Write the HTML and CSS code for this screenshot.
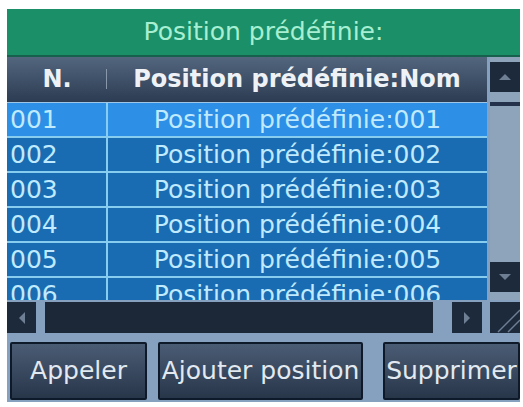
FILE: index.html
```html
<!DOCTYPE html>
<html>
<head>
<meta charset="utf-8">
<link rel="stylesheet" href="styles.css">
</head>
<body>
<div class="panel">
  <div class="title">Position prédéfinie:</div>
  <div class="main">
    <div class="table">
      <div class="thead">
        <div class="th th-num">N.</div>
        <div class="th th-name">Position prédéfinie:Nom</div>
      </div>
      <div class="tbody">
        <div class="row sel"><div class="c-num">001</div><div class="c-name">Position prédéfinie:001</div></div>
        <div class="row"><div class="c-num">002</div><div class="c-name">Position prédéfinie:002</div></div>
        <div class="row"><div class="c-num">003</div><div class="c-name">Position prédéfinie:003</div></div>
        <div class="row"><div class="c-num">004</div><div class="c-name">Position prédéfinie:004</div></div>
        <div class="row"><div class="c-num">005</div><div class="c-name">Position prédéfinie:005</div></div>
        <div class="row"><div class="c-num">006</div><div class="c-name">Position prédéfinie:006</div></div>
      </div>
    </div>
    <div class="vscroll">
      <div class="sbtn vbtn up"><svg width="12" height="6" viewBox="0 0 12 6"><polygon points="0,6 6,0 12,6" fill="#6f7f93"/></svg></div>
      <div class="vthumb"></div>
      <div class="vspace"></div>
      <div class="sbtn vbtn down"><svg width="12" height="6" viewBox="0 0 12 6"><polygon points="0,0 12,0 6,6" fill="#6f7f93"/></svg></div>
    </div>
  </div>
  <div class="hscroll">
    <div class="sbtn hleft"><svg width="6" height="12" viewBox="0 0 6 12"><polygon points="6,0 6,12 0,6" fill="#6f7f93"/></svg></div>
    <div class="htrack"></div>
    <div class="sbtn hright"><svg width="6" height="12" viewBox="0 0 6 12"><polygon points="0,0 6,6 0,12" fill="#6f7f93"/></svg></div>
    <div class="corner"><svg width="30" height="31" viewBox="0 0 30 31"><line x1="8" y1="30" x2="30" y2="8" stroke="#6f7f93" stroke-width="1.5"/><line x1="18" y1="30" x2="30" y2="18" stroke="#6f7f93" stroke-width="1.5"/></svg></div>
  </div>
  <div class="buttons">
    <div class="btn b1">Appeler</div>
    <div class="btn b2">Ajouter position</div>
    <div class="btn b3">Supprimer</div>
  </div>
</div>
</body>
</html>
```

FILE: styles.css
```css
html, body {
  margin: 0;
  padding: 0;
  background: #ffffff;
}
body {
  font-family: "DejaVu Sans", "Liberation Sans", sans-serif;
  font-size: 25px;
}
.panel {
  margin: 9px 0 0 7px;
  width: 513px;
  background: #85a1bf;
}
.title {
  height: 46px;
  line-height: 46px;
  background: #1b8f68;
  color: #a7efd2;
  text-align: center;
  border-bottom: 2px solid #17604e;
}
.main {
  display: grid;
  grid-template-columns: 480px 30px;
  gap: 3px;
  height: 243px;
}
.table {
  display: flex;
  flex-direction: column;
  overflow: hidden;
}
.thead {
  height: 45px;
  flex: none;
  display: flex;
  background: linear-gradient(#52667e, #2c3c52);
  border-bottom: 1px solid #9fc6e6;
  color: #eef2f6;
  font-weight: bold;
  font-size: 24px;
}
.th {
  line-height: 45px;
  text-align: center;
}
.th-num {
  width: 100px;
  position: relative;
}
.th-num::after {
  content: "";
  position: absolute;
  right: 0;
  top: 12px;
  width: 1px;
  height: 20px;
  background: #8898aa;
}
.th-name {
  flex: 1;
}
.tbody {
  flex: 1;
  overflow: hidden;
}
.row {
  display: flex;
  height: 33px;
  background: #1a6cb2;
  border-bottom: 2px solid #86cdef;
  color: #bfeaff;
}
.row.sel {
  background: #2d8fe6;
}
.c-num {
  width: 96px;
  padding-left: 3px;
  line-height: 33px;
  border-right: 2px solid #86cdef;
}
.c-name {
  flex: 1;
  text-align: center;
  line-height: 33px;
}
.vscroll {
  background: #8ea4bb;
  display: flex;
  flex-direction: column;
  padding: 5px 0 8px;
}
.sbtn {
  background: #1d2a3c;
  display: flex;
  align-items: center;
  justify-content: center;
}
.vbtn {
  height: 30px;
}
.vthumb {
  margin-top: 10px;
  height: 4px;
  background: #23324a;
}
.vspace {
  flex: 1;
}
.hscroll {
  display: flex;
  margin-top: 2px;
  height: 31px;
}
.hleft {
  width: 29px;
}
.htrack {
  width: 388px;
  margin-left: 9px;
  background: #1c2838;
}
.hright {
  width: 30px;
  margin-left: 19px;
}
.corner {
  width: 30px;
  margin-left: 8px;
  background: #1d2a3c;
}
.corner svg {
  display: block;
}
.buttons {
  display: flex;
  gap: 11px;
  margin-top: 9px;
  padding: 0 0 2px 3px;
  background: #85a1bf;
}
.btn {
  height: 54px;
  line-height: 54px;
  text-align: center;
  color: #e2e9f0;
  background: linear-gradient(#4a5c74, #28364a);
  border: 2px solid #0e1a2a;
  border-radius: 2px;
  white-space: nowrap;
}
.b1 { width: 133px; }
.b2 { width: 201px; }
.b3 { width: 133px; margin-left: auto; }
```
